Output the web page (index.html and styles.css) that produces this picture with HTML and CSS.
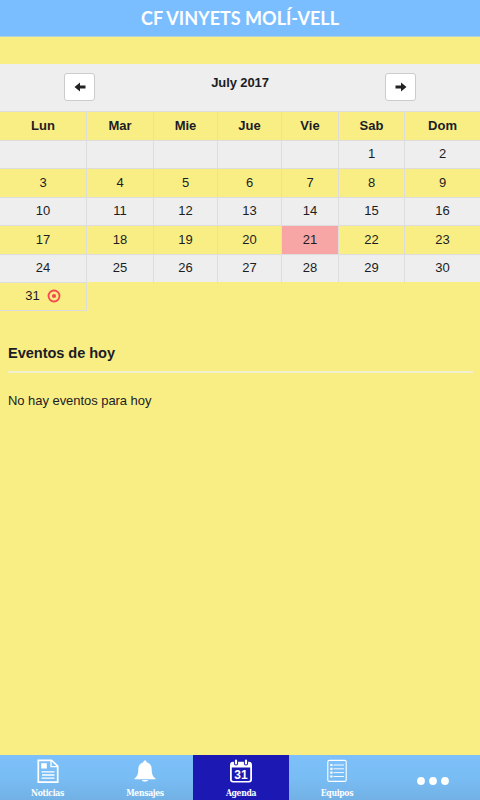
FILE: index.html
```html
<!DOCTYPE html>
<html lang="es">
<head>
    <meta charset="utf-8">
    <title>Agenda</title>
    <link rel="stylesheet" href="styles.css">
</head>
<body>
    <header class="header">CF VINYETS MOLÍ-VELL</header>

    <main class="content">
        <!-- Month navigation -->
        <div class="calendar-nav">
            <button class="btn" aria-label="Mes anterior">
                <svg width="12" height="10" viewBox="0 0 12 10"><path d="M0.5 5L6 0.5V3.4H11.5V6.6H6V9.5Z"/></svg>
            </button>
            <div class="month">July 2017</div>
            <button class="btn" aria-label="Mes siguiente">
                <svg width="12" height="10" viewBox="0 0 12 10"><path d="M11.5 5L6 0.5V3.4H0.5V6.6H6V9.5Z"/></svg>
            </button>
        </div>

        <div class="calendar">
            <div class="week head"><b>Lun</b><b>Mar</b><b>Mie</b><b>Jue</b><b>Vie</b><b>Sab</b><b>Dom</b></div>
            <div class="week"><span></span><span></span><span></span><span></span><span></span><span>1</span><span>2</span></div>
            <div class="week"><span>3</span><span>4</span><span>5</span><span>6</span><span>7</span><span>8</span><span>9</span></div>
            <div class="week"><span>10</span><span>11</span><span>12</span><span>13</span><span>14</span><span>15</span><span>16</span></div>
            <div class="week"><span>17</span><span>18</span><span>19</span><span>20</span><span class="today">21</span><span>22</span><span>23</span></div>
            <div class="week"><span>24</span><span>25</span><span>26</span><span>27</span><span>28</span><span>29</span><span>30</span></div>
            <div class="week last">
                <span>31
                    <svg class="event" width="14" height="14" viewBox="0 0 14 14"><circle cx="7" cy="7" r="5.5"/><circle class="dot" cx="7" cy="7" r="2.1"/></svg>
                </span>
            </div>
        </div>

        <section class="events">
            <h2>Eventos de hoy</h2>
            <p>No hay eventos para hoy</p>
        </section>
    </main>

    <!-- Bottom tabs -->
    <nav class="tabs">
        <a class="tab">
            <svg width="22" height="24" viewBox="0 0 22 24" fill="none" stroke="#fff">
                <path stroke-width="1.7" d="M1.3 1.3H14.5L20.7 7V23.2H1.3Z"/>
                <path stroke-width="1.3" d="M14 1V7.7H20.5M4.5 12.8H17.5M5 16H17.5M4.5 19.2H17.5"/>
                <path fill="#fff" stroke="none" d="M4.2 4.2H9.8V9.5H4.2Z"/>
            </svg>
            <span>Noticias</span>
        </a>
        <a class="tab">
            <svg width="22" height="24" viewBox="0 0 22 24" fill="#fff">
                <path d="M11 1.5C12 1.5 12.6 2.2 12.6 3.2C16 4 17.7 6.7 17.7 10.2C17.7 15 18.8 17.5 21.5 19.5V20.3H0.5V19.5C3.2 17.5 4.3 15 4.3 10.2C4.3 6.7 6 4 9.4 3.2C9.4 2.2 10 1.5 11 1.5ZM7.8 21H14.2C13.5 23 8.5 23 7.8 21Z"/>
            </svg>
            <span>Mensajes</span>
        </a>
        <a class="tab active">
            <svg width="24" height="24" viewBox="0 0 24 24">
                <rect x="1" y="2.8" width="22" height="20.7" rx="3" fill="#fff"/>
                <path fill="#1c18b4" d="M2.8 8.6H21.2V20.2Q21.2 22 19.7 22H4.3Q2.8 22 2.8 20.2Z"/>
                <path fill="none" stroke="#1c18b4" stroke-width="4.2" stroke-linecap="round" d="M7 2V4.5M17 2V4.5"/>
                <path fill="none" stroke="#fff" stroke-width="2.2" stroke-linecap="round" d="M7 1.5V4.5M17 1.5V4.5"/>
                <text class="icon-day" x="12" y="19.8">31</text>
            </svg>
            <span>Agenda</span>
        </a>
        <a class="tab">
            <svg width="20" height="24" viewBox="0 0 20 24" fill="none" stroke="#fff">
                <rect x="0.8" y="1.4" width="18.4" height="21" rx="1.5" stroke-width="1.1"/>
                <path stroke-width="0.9" d="M6.5 6H17M6.5 9.8H17M6.5 13.6H17M6.5 17.5H17"/>
                <path stroke-width="2.2" d="M3.3 6H5.5M3.3 9.8H5.5M3.3 13.6H5.5M3.3 17.5H5.5"/>
            </svg>
            <span>Equipos</span>
        </a>
        <a class="tab more" aria-label="Más">
            <svg width="32" height="8" viewBox="0 0 32 8" fill="#fff"><circle cx="4" cy="4" r="3.9"/><circle cx="16" cy="4" r="3.9"/><circle cx="28" cy="4" r="3.9"/></svg>
        </a>
    </nav>
</body>
</html>
```
FILE: styles.css
```css
* {
    box-sizing: border-box;
}

body {
    margin: 0;
    height: 800px;
    display: flex;
    flex-direction: column;
    overflow: hidden;
    background: #f9ee84;
    color: #1c1c24;
    font: 13px/18px "Liberation Sans", Arial, sans-serif;
}

.header {
    height: 37px;
    background: #7bbeff;
    border-bottom: 1px solid #b1d2d5;
    color: #fff;
    font: bold 18px/36px Lato, sans-serif;
    text-align: center;
}

.content {
    flex: 1;
    padding-top: 27px;
}

/* Month navigation */
.calendar-nav {
    display: grid;
    grid-template-columns: 159px 162px 159px;
    justify-items: center;
    height: 47px;
    padding-top: 9px;
    background: #eee;
}

.month {
    padding-top: 1px;
    font-weight: bold;
    letter-spacing: -0.1px;
}

.btn {
    display: flex;
    align-items: center;
    justify-content: center;
    width: 31px;
    height: 28px;
    padding: 0;
    background: #fff;
    border: 1px solid #ccc;
    border-radius: 3px;
    fill: #222;
}

/* Calendar */
.week {
    display: grid;
    grid-template-columns: 87px 67px 64px 64px 57px 66px 75px;
    height: 28.5px;
}

.week > * {
    display: flex;
    align-items: center;
    justify-content: center;
    border-top: 1px solid #ddd;
    border-right: 1px solid #ddd;
}

.week > :nth-child(7) {
    border-right: 0;
}

.week:nth-child(even) {
    background: #eee;
}

.last > * {
    border-bottom: 1px solid #ddd;
}

.today {
    background: #f8a5a5;
}

.event {
    margin-left: 7px;
    fill: none;
    stroke: #f5484f;
    stroke-width: 1.8;
}

.dot {
    fill: #f5484f;
    stroke: none;
}

/* Events of the day */
.events {
    padding: 32px 7px 0 8px;
}

.events h2 {
    height: 30px;
    margin: 0 0 19px;
    border-bottom: 2px solid #f1eed2;
    font-size: 14.6px;
    line-height: 21px;
    letter-spacing: -0.06px;
}

.events p {
    margin: 0;
    letter-spacing: -0.05px;
}

/* Bottom tabs */
.tabs {
    display: grid;
    grid-template-columns: 97px 96px 96px 96px 95px;
    height: 45px;
    background: linear-gradient(#7dc0fa, #79bdf5 50%, #72b1e4);
}

.tab {
    display: flex;
    flex-direction: column;
    align-items: center;
    padding-top: 4px;
    color: #fff;
    font: bold 8.5px/12px "DejaVu Serif Condensed", "DejaVu Serif", serif;
    letter-spacing: -0.3px;
}

.tab:first-child {
    padding-right: 2px;
}

.tab span {
    margin-top: 4px;
}

.active {
    background: #1c18b4;
}

.more {
    padding-top: 22px;
}

.icon-day {
    fill: #fff;
    font: bold 12px "Liberation Sans", Arial, sans-serif;
    letter-spacing: 0;
    text-anchor: middle;
}
```
